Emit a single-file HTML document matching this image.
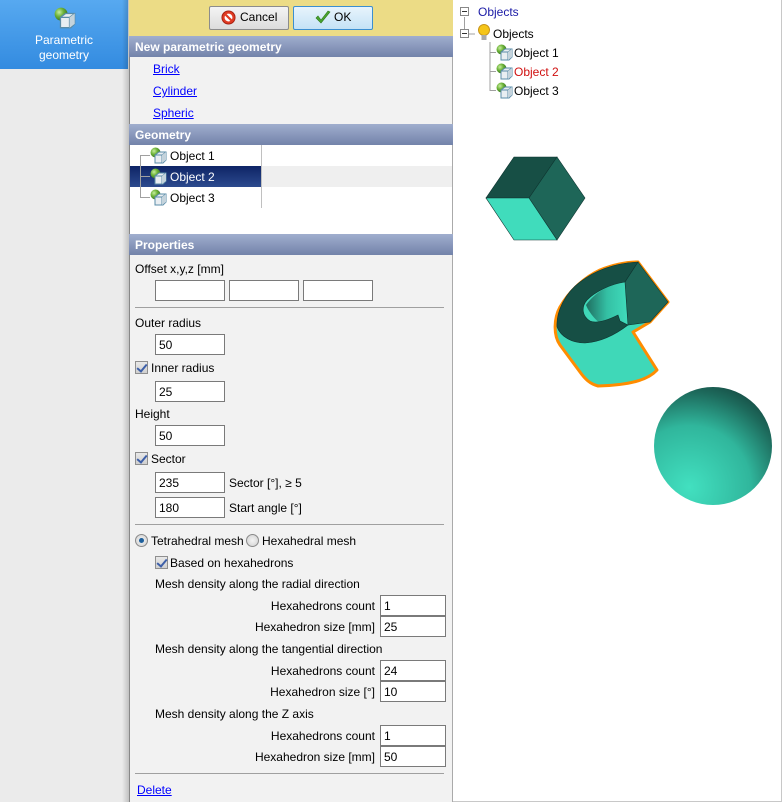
<!DOCTYPE html>
<html><head><meta charset="utf-8">
<style>
*{box-sizing:border-box;margin:0;padding:0}
body{width:782px;height:802px;overflow:hidden;background:#fff;font-family:"Liberation Sans",Arial,sans-serif;font-size:12px;color:#000;position:relative}
.a{position:absolute;white-space:nowrap}
.hdr{position:absolute;left:129px;width:324px;height:21px;background:linear-gradient(#a0aece,#7383aa);color:#fff;font-weight:bold;padding:4px 0 0 6px;font-size:12px}
.lnk{color:#00f;text-decoration:underline}
.in{position:absolute;background:#fff;border:1px solid #7a7a7a;height:21px;padding:3px 0 0 3px}
.sep{position:absolute;left:135px;width:309px;height:1px;background:#a0a0a0}
.cb{position:absolute;width:13px;height:13px;border:1px solid #8f8f8f;background:linear-gradient(#e8e8e8,#d0d0d0)}
.cb:after{content:"";position:absolute;left:3px;top:0px;width:4px;height:8px;border:solid #3d5fa8;border-width:0 2px 2px 0;transform:rotate(40deg)}
.rd{position:absolute;width:13px;height:13px;border-radius:50%;border:1px solid #8a8a8a;background:radial-gradient(#f4f4f4,#cfcfcf)}
.r{position:absolute;text-align:right;width:240px}
</style></head><body>
<svg width="0" height="0" style="position:absolute"><defs>
<radialGradient id="gb" cx="35%" cy="35%" r="65%"><stop offset="0" stop-color="#c8eea0"/><stop offset="0.5" stop-color="#6fb43a"/><stop offset="1" stop-color="#3a7a20"/></radialGradient>
<g id="ic"><circle cx="5.5" cy="5.5" r="5" fill="url(#gb)"/><path d="M5 8 L9 5 H16 V13 L13 16 H5Z" fill="#e9eef2" stroke="#5a8ca8" stroke-width="1"/><path d="M5 8 H12 L16 5 M12 8 V16" fill="none" stroke="#5a8ca8" stroke-width="1"/><path d="M12 8 L16 5 V13 L12 16Z" fill="#c4d3dc"/></g>
</defs></svg>

<!-- sidebar -->
<div class="a" style="left:0;top:0;width:129px;height:802px;background:#ebebeb"></div>
<div class="a" style="left:0;top:0;width:128px;height:69px;background:linear-gradient(#57a9f0,#338be0)"></div>
<svg class="a" style="left:53px;top:7px" width="24" height="22" viewBox="0 0 17 17"><use href="#ic"/></svg>
<div class="a" style="left:0;top:33px;width:128px;text-align:center;color:#fff;line-height:15px">Parametric<br>geometry</div>
<div class="a" style="left:122px;top:0;width:7px;height:802px;background:linear-gradient(90deg,rgba(0,0,0,0),rgba(0,0,0,.18))"></div>

<!-- panel -->
<div class="a" style="left:129px;top:0;width:324px;height:802px;background:#f2f2f2;border-left:1px solid #888;border-right:1px solid #aaa"></div>
<div class="a" style="left:129px;top:0;width:324px;height:36px;background:#ecdc86"></div>
<div class="a" style="left:209px;top:6px;width:80px;height:24px;border:1px solid #8c8c8c;border-radius:2px;background:linear-gradient(#f4f4f4,#dcdcdc)"></div>
<svg class="a" style="left:221px;top:10px" width="15" height="15" viewBox="0 0 16 16"><circle cx="8" cy="8" r="7" fill="#e03a22" stroke="#a52010"/><circle cx="8" cy="8" r="4.2" fill="#fff"/><path d="M4.8 4.8 L11.2 11.2" stroke="#e03a22" stroke-width="2.4"/></svg>
<div class="a" style="left:240px;top:10px">Cancel</div>
<div class="a" style="left:293px;top:6px;width:80px;height:24px;border:1px solid #3c8fd0;border-radius:2px;background:linear-gradient(#e8f4fc,#c4e2f6)"></div>
<svg class="a" style="left:315px;top:10px" width="16" height="15" viewBox="0 0 16 15"><path d="M1 8 L6 13 L15 2 L13 1 L6 10 L3 6Z" fill="#4aa630" stroke="#2e7a1c" stroke-width=".6"/></svg>
<div class="a" style="left:334px;top:10px">OK</div>

<div class="hdr" style="top:36px">New parametric geometry</div>
<div class="a lnk" style="left:153px;top:62px">Brick</div>
<div class="a lnk" style="left:153px;top:84px">Cylinder</div>
<div class="a lnk" style="left:153px;top:106px">Spheric</div>
<div class="hdr" style="top:124px">Geometry</div>
<div class="a" style="left:130px;top:145px;width:322px;height:89px;background:#fff"></div>
<div class="a" style="left:262px;top:166px;width:190px;height:21px;background:#efefef"></div>
<div class="a" style="left:130px;top:166px;width:131px;height:21px;background:linear-gradient(#0e2466,#2c4a8e)"></div>
<div class="a" style="left:261px;top:145px;width:1px;height:63px;background:#c0c0c0"></div>
<div class="a" style="left:140px;top:155px;width:1px;height:43px;background:#a0a0a0"></div>
<div class="a" style="left:140px;top:155px;width:10px;height:1px;background:#a0a0a0"></div>
<div class="a" style="left:140px;top:176px;width:10px;height:1px;background:#a0a0a0"></div>
<div class="a" style="left:140px;top:197px;width:10px;height:1px;background:#a0a0a0"></div>
<svg class="a" style="left:150px;top:147px" width="17" height="17"><use href="#ic"/></svg>
<svg class="a" style="left:150px;top:168px" width="17" height="17"><use href="#ic"/></svg>
<svg class="a" style="left:150px;top:189px" width="17" height="17"><use href="#ic"/></svg>
<div class="a" style="left:170px;top:149px">Object 1</div>
<div class="a" style="left:170px;top:170px;color:#fff">Object 2</div>
<div class="a" style="left:170px;top:191px">Object 3</div>

<div class="hdr" style="top:234px">Properties</div>
<div class="a" style="left:135px;top:262px">Offset x,y,z [mm]</div>
<div class="in" style="left:155px;top:280px;width:70px"></div>
<div class="in" style="left:229px;top:280px;width:70px"></div>
<div class="in" style="left:303px;top:280px;width:70px"></div>
<div class="sep" style="top:307px"></div>
<div class="a" style="left:135px;top:316px">Outer radius</div>
<div class="in" style="left:155px;top:334px;width:70px">50</div>
<div class="cb" style="left:135px;top:361px"></div>
<div class="a" style="left:151px;top:361px">Inner radius</div>
<div class="in" style="left:155px;top:381px;width:70px">25</div>
<div class="a" style="left:135px;top:407px">Height</div>
<div class="in" style="left:155px;top:425px;width:70px">50</div>
<div class="cb" style="left:135px;top:452px"></div>
<div class="a" style="left:151px;top:452px">Sector</div>
<div class="in" style="left:155px;top:472px;width:70px">235</div>
<div class="a" style="left:229px;top:476px">Sector [°], ≥ 5</div>
<div class="in" style="left:155px;top:497px;width:70px">180</div>
<div class="a" style="left:229px;top:501px">Start angle [°]</div>
<div class="sep" style="top:524px"></div>
<div class="rd" style="left:135px;top:534px"><div style="position:absolute;left:3px;top:3px;width:5px;height:5px;border-radius:50%;background:#1d5f9c"></div></div>
<div class="a" style="left:151px;top:534px">Tetrahedral mesh</div>
<div class="rd" style="left:246px;top:534px"></div>
<div class="a" style="left:262px;top:534px">Hexahedral mesh</div>
<div class="cb" style="left:155px;top:556px"></div>
<div class="a" style="left:170px;top:556px">Based on hexahedrons</div>
<div class="a" style="left:155px;top:577px">Mesh density along the radial direction</div>
<div class="r" style="left:135px;top:599px">Hexahedrons count</div>
<div class="in" style="left:380px;top:595px;width:66px">1</div>
<div class="r" style="left:135px;top:620px">Hexahedron size [mm]</div>
<div class="in" style="left:380px;top:616px;width:66px">25</div>
<div class="a" style="left:155px;top:642px">Mesh density along the tangential direction</div>
<div class="r" style="left:135px;top:664px">Hexahedrons count</div>
<div class="in" style="left:380px;top:660px;width:66px">24</div>
<div class="r" style="left:135px;top:685px">Hexahedron size [°]</div>
<div class="in" style="left:380px;top:681px;width:66px">10</div>
<div class="a" style="left:155px;top:707px">Mesh density along the Z axis</div>
<div class="r" style="left:135px;top:729px">Hexahedrons count</div>
<div class="in" style="left:380px;top:725px;width:66px">1</div>
<div class="r" style="left:135px;top:750px">Hexahedron size [mm]</div>
<div class="in" style="left:380px;top:746px;width:66px">50</div>
<div class="sep" style="top:773px"></div>
<div class="a lnk" style="left:137px;top:783px">Delete</div>

<!-- right -->
<div class="a" style="left:453px;top:0;width:329px;height:802px;background:#fff;border-right:1px solid #c8c8c8;border-bottom:1px solid #c8c8c8"></div>
<svg class="a" style="left:453px;top:0" width="329" height="110">
<g stroke="#a0a0a0" fill="none"><path d="M11.5 17 V33 M16 34 H22 M37 42 V91 M37 52.5 H43 M37 71.5 H43 M37 90.5 H43"/></g>
<rect x="7.5" y="7.5" width="8" height="8" fill="#fff" stroke="#888"/><path d="M9 11.5 H14" stroke="#333"/>
<rect x="7.5" y="29.5" width="8" height="8" fill="#fff" stroke="#888"/><path d="M9 33.5 H14" stroke="#333"/>
<circle cx="31" cy="30" r="5.5" fill="#f5c518" stroke="#c8951a"/><rect x="28.5" y="35" width="5" height="5" fill="#aaa"/>
<use href="#ic" x="43" y="44"/><use href="#ic" x="43" y="63"/><use href="#ic" x="43" y="82"/>
</svg>
<div class="a" style="left:478px;top:5px;color:#1a1aa6">Objects</div>
<div class="a" style="left:493px;top:27px">Objects</div>
<div class="a" style="left:514px;top:46px">Object 1</div>
<div class="a" style="left:514px;top:65px;color:#d01010">Object 2</div>
<div class="a" style="left:514px;top:84px">Object 3</div>

<svg class="a" style="left:0;top:0" width="782" height="802">
<defs>
<radialGradient id="sp" cx="30%" cy="85%" r="95%"><stop offset="0" stop-color="#42e0c0"/><stop offset="0.55" stop-color="#30b69c"/><stop offset="0.85" stop-color="#1d6a5c"/><stop offset="1" stop-color="#164a42"/></radialGradient>
<linearGradient id="iw" x1="0" y1="0" x2="1" y2="0"><stop offset="0" stop-color="#1f6e60"/><stop offset=".5" stop-color="#34c0a4"/><stop offset="1" stop-color="#40dcbc"/></linearGradient>
</defs>
<polygon points="514,157 557,157 529,198 486,198" fill="#174f45" stroke="#0e3530" stroke-width=".6"/>
<polygon points="557,157 585,198 557,240 529,198" fill="#1e6658" stroke="#0e3530" stroke-width=".6"/>
<polygon points="486,198 529,198 557,240 514,240" fill="#40dcbc" stroke="#0e3530" stroke-width=".6"/>
<circle cx="713" cy="446" r="59" fill="url(#sp)"/>
<path d="M638,262 L668,302 L650,322 L633,332 L657,370 C648,380 630,385 598,386 C590,384 585,379 580,372 L560,345 C553,335 554,318 560,307 C570,290 585,277 600,270 C615,264 628,262 638,262Z" fill="#3fd8b8" stroke="#ff8c00" stroke-width="3" stroke-linejoin="round"/>
<path d="M625,282 L628,325 L610,330 C600,325 590,315 586,305 C595,292 610,284 625,282Z" fill="url(#iw)"/>
<path d="M557,327 C556,312 565,293 580,282 C598,268 618,263 638,262 L625,282 C610,284 595,292 587,300 C581,307 582,316 590,321 C597,324 608,320 618,315 L620,321 L628,325 C615,335 600,342 585,343 C572,343 561,337 557,327Z" fill="#164f45" stroke="#0e3530" stroke-width=".6"/>
<polygon points="638,262 668,302 650,322 628,325 625,282" fill="#1e6658" stroke="#0e3530" stroke-width=".6"/>
</svg>
</body></html>
